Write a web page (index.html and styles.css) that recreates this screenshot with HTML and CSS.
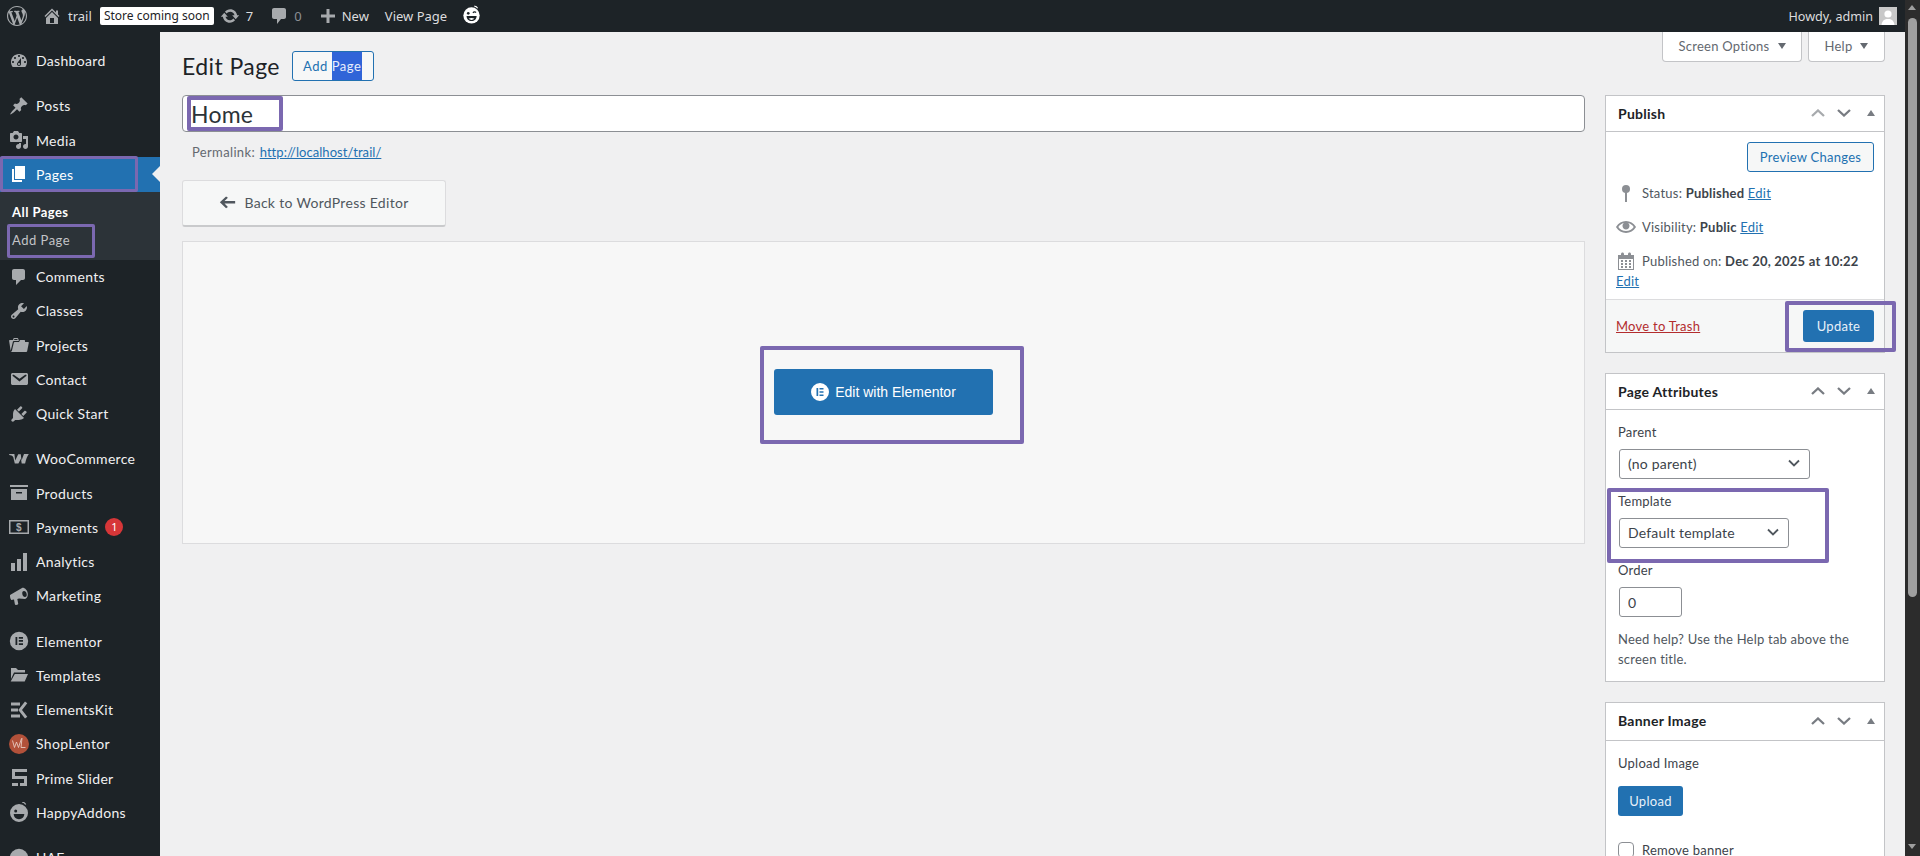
FILE: index.html
```html
<!DOCTYPE html>
<html lang="en">
<head>
<meta charset="utf-8">
<title>Edit Page</title>
<link rel="stylesheet" href="styles.css">
</head>
<body>
<div class="window">
  <header class="adminbar">
    <svg class="ab-wp" viewBox="0 0 20 20"><path d="M20 10c0-5.51-4.49-10-10-10C4.48 0 0 4.49 0 10c0 5.52 4.48 10 10 10 5.51 0 10-4.48 10-10zM7.78 15.37L4.37 6.22c.55-.02 1.17-.08 1.17-.08.5-.06.44-1.13-.06-1.11 0 0-1.45.11-2.37.11-.18 0-.37 0-.58-.01C4.12 2.69 6.87 1.11 10 1.11c2.33 0 4.45.87 6.05 2.34-.68-.11-1.65.39-1.65 1.58 0 .74.45 1.36.9 2.1.35.61.55 1.36.55 2.46 0 1.49-1.4 5-1.4 5l-3.03-8.37c.54-.02.82-.17.82-.17.5-.05.44-1.25-.06-1.22 0 0-1.44.12-2.38.12-.87 0-2.33-.12-2.33-.12-.5-.03-.56 1.2-.06 1.22l.92.08 1.26 3.41zM17.41 10c.24-.64.74-1.87.43-4.25.7 1.29 1.05 2.71 1.05 4.25 0 3.29-1.73 6.24-4.4 7.78.97-2.59 1.94-5.2 2.92-7.78zM6.1 18.09C3.12 16.65 1.11 13.53 1.11 10c0-1.3.23-2.48.72-3.59C3.25 10.3 4.67 14.2 6.1 18.09zm4.03-6.63l2.58 6.98c-.86.29-1.76.45-2.71.45-.79 0-1.57-.11-2.29-.33.81-2.38 1.62-4.74 2.42-7.1z"/></svg>
    <svg class="ab-ico ab-home" viewBox="0 0 20 20"><path d="M16 8.5l1.53 1.53-1.06 1.06L10 4.62l-6.47 6.47-1.06-1.06L10 2.5l4 4v-2h2v4zm-6-2.46l6 5.99V18H4v-5.97zM12 17v-5H8v5h4z"/></svg>
    <span class="ab-text ab-trail">trail</span>
    <span class="ab-badge">Store coming soon</span>
    <svg class="ab-ico ab-update" viewBox="0 0 20 20"><path d="M10.2 3.28c3.53 0 6.43 2.61 6.92 6h2.08l-3.5 4-3.5-4h2.32c-.45-1.97-2.21-3.45-4.32-3.45-1.45 0-2.73.71-3.54 1.78L4.95 5.66C6.23 4.2 8.11 3.28 10.2 3.28zm-.4 13.44c-3.52 0-6.43-2.61-6.92-6H.8l3.5-4c1.17 1.33 2.33 2.67 3.5 4H5.48c.45 1.97 2.21 3.45 4.32 3.45 1.45 0 2.73-.71 3.54-1.78l1.71 1.95c-1.28 1.46-3.15 2.38-5.25 2.38z"/></svg>
    <span class="ab-text ab-seven">7</span>
    <svg class="ab-ico ab-comment" viewBox="0 0 20 20"><path d="M5 2h10c1.1 0 2 .9 2 2v7c0 1.1-.9 2-2 2h-3l-4 5v-5H5c-1.1 0-2-.9-2-2V4c0-1.1.9-2 2-2z"/></svg>
    <span class="ab-text ab-zero">0</span>
    <svg class="ab-ico ab-plus" viewBox="0 0 20 20"><path d="M17 8.5v3h-5.5V17h-3v-5.500H3v-3h5.500V3h3v5.500z"/></svg>
    <span class="ab-text ab-new">New</span>
    <span class="ab-text ab-view">View Page</span>
    <svg class="ab-happy" viewBox="0 0 20 20"><circle cx="10" cy="11" r="8.6" fill="#fff"/><path d="M13 1.2c1.4.1 2.8.9 3.4 2.2" stroke="#fff" stroke-width="1.2" fill="none"/><circle cx="6.6" cy="8.8" r="1.4" fill="#1d2327"/><path d="M11.5 8.3c1-1.3 2.4-1.3 3.3-.4" stroke="#1d2327" stroke-width="1.3" fill="none"/><path d="M4.8 11.5h10.6c0 3.2-2.4 5.3-5.3 5.3s-5.3-2.1-5.3-5.3z" fill="#1d2327"/><path d="M7 14.6c1.8-1.1 4.2-1.1 6 0-1.7 1.500-4.3 1.500-6 0z" fill="#fff"/></svg>
    <span class="ab-text ab-howdy">Howdy, admin</span>
    <svg class="ab-avatar" viewBox="0 0 18 18"><rect width="18" height="18" fill="#c8c8c8"/><circle cx="9" cy="7" r="3.6" fill="#fff"/><path d="M2.5 18c.5-4.4 3-6 6.5-6s6 1.6 6.500 6z" fill="#fff"/></svg>
  </header>
  <div class="below">
    <aside class="sidebar">
      <a class="row"><svg class="mi" viewBox="0 0 20 20"><path d="M3.76 16h12.48c1.1-1.37 1.76-3.11 1.76-5 0-4.42-3.58-8-8-8s-8 3.58-8 8c0 1.890.66 3.63 1.76 5zM10 4c.55 0 1 .45 1 1s-.45 1-1 1-1-.45-1-1 .45-1 1-1zM6 6c.55 0 1 .45 1 1s-.45 1-1 1-1-.45-1-1 .45-1 1-1zm8 0c.55 0 1 .45 1 1s-.45 1-1 1-1-.45-1-1 .45-1 1-1zm-5.370 5.550L12 7v6c0 1.100-.9 2-2 2s-2-.9-2-2c0-.57.24-1.080.63-1.450zM4 10c.55 0 1 .45 1 1s-.45 1-1 1-1-.45-1-1 .45-1 1-1zm12 0c.55 0 1 .45 1 1s-.45 1-1 1-1-.45-1-1 .45-1 1-1zm-5 3c0-.55-.45-1-1-1s-1 .45-1 1 .45 1 1 1 1-.45 1-1z"/></svg><span>Dashboard</span></a>
      <a class="row sep"><svg class="mi" viewBox="0 0 20 20"><path d="M10.440 3.020l1.820-1.820 6.360 6.350-1.830 1.820c-1.050-.68-2.480-.57-3.410.36l-.75.75c-.92.93-1.040 2.350-.35 3.410l-1.830 1.820-2.410-2.410-2.800 2.790c-.42.42-3.380 2.710-3.800 2.290s1.860-3.390 2.280-3.810l2.790-2.790L4.100 9.360l1.830-1.820c1.050.69 2.480.57 3.400-.36l.75-.75c.93-.92 1.050-2.350.36-3.410z"/></svg><span>Posts</span></a>
      <a class="row"><svg class="mi" viewBox="0 0 20 20"><path d="M13 11V4c0-.55-.45-1-1-1h-1.670L9 1H5L3.670 3H2c-.55 0-1 .45-1 1v7c0 .55.45 1 1 1h10c.55 0 1-.45 1-1zM7 4.500c1.380 0 2.500 1.120 2.500 2.500S8.380 9.500 7 9.500 4.500 8.380 4.500 7 5.620 4.500 7 4.500zM14 6h5v10.500c0 1.380-1.120 2.500-2.500 2.500S14 17.880 14 16.500s1.120-2.500 2.500-2.500c.17 0 .34.02.5.05V9h-3V6zm-4 8.050V13h2v3.500c0 1.380-1.120 2.500-2.500 2.500S7 17.880 7 16.500 8.120 14 9.500 14c.17 0 .34.02.5.05z"/></svg><span>Media</span></a>
      <a class="row current"><svg class="mi" viewBox="0 0 20 20"><path d="M6 15V2h10v13H6zm-1 1h8v2H3V5h2v11z"/></svg><span>Pages</span></a>
      <div class="submenu">
        <a class="sub sub-on">All Pages</a>
        <a class="sub">Add Page</a>
      </div>
      <a class="row"><svg class="mi" viewBox="0 0 20 20"><path d="M5 2h9c1.100 0 2 .9 2 2v7c0 1.100-.9 2-2 2h-2l-5 5v-5H5c-1.100 0-2-.9-2-2V4c0-1.100.9-2 2-2z"/></svg><span>Comments</span></a>
      <a class="row"><svg class="mi" viewBox="0 0 20 20"><path d="M16.680 9.770c-1.340 1.340-3.300 1.670-4.950.99l-5.410 6.520c-.99.99-2.590.99-3.580 0s-.99-2.590 0-3.570l6.520-5.420c-.68-1.650-.35-3.610.99-4.950 1.280-1.280 3.120-1.620 4.720-1.060l-2.890 2.890 2.820 2.820 2.860-2.870c.53 1.580.18 3.390-1.080 4.650zM3.810 16.210c.4.39 1.040.39 1.430 0 .4-.4.4-1.040 0-1.430-.39-.4-1.030-.4-1.430 0-.39.39-.39 1.030 0 1.430z"/></svg><span>Classes</span></a>
      <a class="row"><svg class="mi" viewBox="0 0 20 20"><path d="M4 5H.78c-.37 0-.74.32-.69.84l1.560 9.990S3.500 8.470 3.860 6.700c.11-.53.61-.7.98-.7H10s-.7-2.080-.77-2.310C9.110 3.250 8.890 3 8.450 3H5.140c-.36 0-.7.23-.8.64C4.250 4.040 4 5 4 5zm4.880 0h-4s.42-1 .87-1h2.130c.48 0 1 1 1 1zM2.670 16.250c-.31.47-.76.75-1.260.75h15.730c.54 0 .92-.31 1.030-.83.44-2.190 1.680-8.440 1.680-8.440.07-.5-.3-.73-.62-.73H16V5.530c0-.16-.26-.53-.66-.53h-3.760c-.52 0-.87.58-.87.58L10 7H5.590c-.32 0-.63.19-.69.5 0 0-1.590 6.700-1.720 7.330-.07.37-.22.99-.51 1.420z"/></svg><span>Projects</span></a>
      <a class="row"><svg class="mi" viewBox="0 0 20 20"><path d="M3.870 4h13.250C18.370 4 19 4.590 19 5.790v8.420c0 1.190-.63 1.790-1.880 1.790H3.870c-1.250 0-1.880-.6-1.880-1.790V5.790c0-1.200.63-1.790 1.880-1.790zm6.620 8.600l6.740-5.530c.24-.2.43-.66.13-1.070-.29-.41-.82-.42-1.170-.17l-5.700 3.860L4.800 5.830c-.35-.25-.88-.24-1.170.17-.3.41-.11.87.13 1.070z"/></svg><span>Contact</span></a>
      <a class="row"><svg class="mi" viewBox="0 0 20 20"><path d="M13.110 4.360L9.870 7.600 8 5.730l3.240-3.240c.35-.34 1.050-.2 1.560.32.52.51.66 1.210.31 1.550zm-8 1.770l.91-1.120 9.010 9.010-1.190.84c-.71.71-2.630 1.160-3.820 1.160H6.140L4.900 17.260c-.59.59-1.540.59-2.120 0-.59-.58-.59-1.530 0-2.120l1.240-1.240v-3.880c0-1.130.4-3.190 1.090-3.890zm7.260 3.970l3.240-3.240c.34-.35 1.040-.21 1.550.31.52.51.66 1.210.31 1.550l-3.240 3.250z"/></svg><span>Quick Start</span></a>
      <a class="row sep"><svg class="mi" viewBox="0 0 20 20"><path d="M.2 5h5.200l.8 6.500L9.200 5.200h2.600l.7 6.300 2.500-6.500h4.800c-1.400 1.800-2.800 5.200-3.700 9.500h-3.400l-.8-4.700-2.500 4.700H5.800L4.300 8.300C3.700 6.800 1.600 6 .2 6z"/></svg><span>WooCommerce</span></a>
      <a class="row"><svg class="mi" viewBox="0 0 20 20"><path d="M1 2h18v2H1zM2 6h16v11H2zm5 3v1.500h6V9z" fill-rule="evenodd"/></svg><span>Products</span></a>
      <a class="row"><svg class="mi" viewBox="0 0 20 20"><path fill-rule="evenodd" d="M0 3h20v14H0zm1.500 1.500v11h17v-11z"/><text x="10" y="13.800" class="dollar">$</text></svg><span>Payments</span><b class="count">1</b></a>
      <a class="row"><svg class="mi" viewBox="0 0 20 20"><path d="M2 11h4v8H2zM8 7h4v12H8zM14 1h4v18h-4z"/></svg><span>Analytics</span></a>
      <a class="row"><svg class="mi" viewBox="0 0 20 20"><path fill-rule="evenodd" d="M1 9l12-7c1.800-.9 5 1.500 5.700 5 .5 3-.8 5.700-2.700 5.900L10 12.500l-1.700.4.9 4.600c.1.6-.3 1.100-.9 1.200l-1.300.2c-.5.100-1-.2-1.100-.7L5 13.600l-2.700.5C1.400 13 .9 11 1 9zm14-4c-1.300 0-2 1.300-1.700 3 .3 1.700 1.400 3 2.700 3s2-1.300 1.700-3C17.400 6.300 16.300 5 15 5z"/></svg><span>Marketing</span></a>
      <a class="row sep"><svg class="mi" viewBox="0 0 20 20"><path fill-rule="evenodd" d="M10 .8a9.200 9.200 0 1 0 0 18.400A9.200 9.200 0 0 0 10 .8zM6.500 6h1.800v8H6.500zm3.300 0H14v1.700H9.800zm0 3.100H14v1.700H9.800zm0 3.200H14V14H9.800z"/></svg><span>Elementor</span></a>
      <a class="row"><svg class="mi" viewBox="0 0 20 20"><path d="M2 3h5l2 2h7v2.500H5L2 14zM5.800 9H19l-3.300 7.500H1.700z"/></svg><span>Templates</span></a>
      <a class="row"><svg class="mi" viewBox="0 0 20 20"><path d="M2 2.500h9v3H2zM2 8.500h7v3H2zM2 14.500h9v3H2zM16 1.500l2.300 1.800-5.300 6.700 5.300 6.700-2.300 1.800L9.300 10z"/></svg><span>ElementsKit</span></a>
      <a class="row"><svg class="mi mi-shop" viewBox="0 0 20 20"><circle cx="10" cy="10" r="10" fill="#b2513a"/><path d="M3.500 6.500l2 7 2-5.500 2 5.500 3-9M13 4l-1 9.500h4.500" stroke="#e9c9bf" stroke-width=".9" fill="none"/></svg><span>ShopLentor</span></a>
      <a class="row"><svg class="mi" viewBox="0 0 20 20"><path d="M3 1h15v3H6v4h12v10h-7v-3h4v-4H3zM3 15h6v3H3z"/></svg><span>Prime Slider</span></a>
      <a class="row"><svg class="mi" viewBox="0 0 20 20"><path fill-rule="evenodd" d="M10 2a9 9 0 1 0 0 18 9 9 0 0 0 0-18zM6.700 7.500a1.500 1.500 0 1 1 0 3 1.500 1.500 0 0 1 0-3zM4.700 12h10.600c0 3-2.300 5.200-5.300 5.200S4.700 15 4.700 12z"/><path d="M13 0c1.600.2 3 1.100 3.700 2.500M11.500 8.400c1-1.300 2.400-1.300 3.300-.4" stroke="#a7aaad" stroke-width="1.200" fill="none"/></svg><span>HappyAddons</span></a>
      <a class="row sep"><svg class="mi" viewBox="0 0 20 20"><circle cx="10" cy="10" r="9.200"/></svg><span>UAE</span></a>
    </aside>
    <main class="content">
      <div class="head">
        <div class="title-row">
          <h1>Edit Page</h1>
          <a class="add-new">Add <span class="selected">Page</span></a>
        </div>
        <div class="tabs">
          <a class="tab tab-options">Screen Options <i class="tri"></i></a>
          <a class="tab tab-help">Help <i class="tri"></i></a>
        </div>
      </div>
      <div class="columns">
        <div class="left">
          <input class="post-title" type="text" value="Home">
          <p class="permalink">Permalink: <a class="link">http://localhost/trail/</a></p>
          <a class="back-btn"><svg class="back-arrow" viewBox="0 0 20 20"><path d="M19 8.500H6.500l4-4L8.300 3 1 10l7.300 7 2.200-1.500-4-4H19z" transform="translate(0 -.2)"/></svg>Back to WordPress Editor</a>
          <div class="elementor-panel">
            <a class="elementor-btn"><svg class="eicon" viewBox="0 0 18 18"><path fill-rule="evenodd" d="M9 0a9 9 0 1 0 0 18A9 9 0 0 0 9 0zM5.500 5h1.700v8H5.500zm3 0h4v1.600h-4zm0 3.200h4v1.600h-4zm0 3.200h4V13h-4z"/></svg>Edit with Elementor</a>
          </div>
        </div>
        <div class="right">
          <section class="mbox">
            <div class="mbox-head"><h2>Publish</h2>
              <svg class="hnd off" viewBox="0 0 14 8"><path d="M1 7l6-5.500L13 7" /></svg>
              <svg class="hnd" viewBox="0 0 14 8"><path d="M1 1l6 5.500L13 1"/></svg>
              <i class="toggle"></i>
            </div>
            <div class="preview-row"><a class="btn-outline">Preview Changes</a></div>
            <div class="misc">
              <div class="misc-row"><svg class="misc-ico" viewBox="0 0 20 20"><circle cx="10" cy="6" r="4"/><rect x="9" y="8" width="2" height="11"/></svg><span>Status: <b>Published</b> <a class="link">Edit</a></span></div>
              <div class="misc-row"><svg class="misc-ico" viewBox="0 0 20 20"><path d="M19.700 9.400C17.700 6 14 3.900 10 3.900S2.300 6 .3 9.400L0 10l.3.6c2 3.400 5.700 5.500 9.700 5.500s7.700-2.100 9.700-5.500l.3-.6-.3-.6zM10 14.100c-3.100 0-6-1.600-7.700-4.100C3.600 8 5.700 6.600 8 6.100c-.9.6-1.500 1.700-1.500 2.900 0 1.900 1.600 3.500 3.500 3.500s3.500-1.600 3.500-3.500c0-1.200-.6-2.300-1.500-2.900 2.300.5 4.400 1.900 5.700 3.900-1.700 2.500-4.600 4.100-7.700 4.100z"/></svg><span>Visibility: <b>Public</b> <a class="link">Edit</a></span></div>
              <div class="misc-row misc-date"><svg class="misc-ico" viewBox="0 0 20 20"><path d="M15 4h3v15H2V4h3V3c0-.41.15-.76.44-1.060.29-.29.65-.44 1.060-.44s.77.15 1.060.44c.29.3.44.65.44 1.060v1h4V3c0-.41.15-.76.44-1.060.29-.29.65-.44 1.060-.44s.77.15 1.060.44c.29.3.44.65.44 1.060v1zM17 18V8H3v10h14zM7 9v2H5V9h2zm2 0h2v2H9V9zm4 2V9h2v2h-2zm-6 1v2H5v-2h2zm2 0h2v2H9v-2zm4 2v-2h2v2h-2zm-6 1v2H5v-2h2zm4 2H9v-2h2v2zm4 0h-2v-2h2v2z"/></svg><span>Published on: <b>Dec 20, 2025 at 10:22</b></span></div>
              <a class="link misc-edit">Edit</a>
            </div>
            <div class="major">
              <a class="trash">Move to Trash</a>
              <a class="btn-primary btn-update">Update</a>
            </div>
          </section>
          <section class="mbox">
            <div class="mbox-head"><h2>Page Attributes</h2>
              <svg class="hnd" viewBox="0 0 14 8"><path d="M1 7l6-5.500L13 7"/></svg>
              <svg class="hnd" viewBox="0 0 14 8"><path d="M1 1l6 5.500L13 1"/></svg>
              <i class="toggle"></i>
            </div>
            <div class="attrs">
              <label class="lbl">Parent</label>
              <div class="select select-parent">(no parent)<svg class="chev" viewBox="0 0 12 8"><path d="M1 1.500l5 5 5-5"/></svg></div>
              <label class="lbl lbl-next">Template</label>
              <div class="select select-template">Default template<svg class="chev" viewBox="0 0 12 8"><path d="M1 1.500l5 5 5-5"/></svg></div>
              <label class="lbl lbl-next">Order</label>
              <input class="order" type="text" value="0">
              <p class="help">Need help? Use the Help tab above the screen title.</p>
            </div>
          </section>
          <section class="mbox">
            <div class="mbox-head mbox-head-tall"><h2>Banner Image</h2>
              <svg class="hnd" viewBox="0 0 14 8"><path d="M1 7l6-5.500L13 7"/></svg>
              <svg class="hnd" viewBox="0 0 14 8"><path d="M1 1l6 5.500L13 1"/></svg>
              <i class="toggle"></i>
            </div>
            <div class="attrs">
              <label class="lbl">Upload Image</label>
              <a class="btn-primary btn-upload">Upload</a>
              <div class="check-row"><i class="check"></i><span>Remove banner</span></div>
            </div>
          </section>
        </div>
      </div>
    </main>
  </div>
  <div class="note note-pages"></div>
  <div class="note note-add"></div>
  <div class="note note-home"></div>
  <div class="note note-elementor"></div>
  <div class="note note-update"></div>
  <div class="note note-template"></div>
</div>
<div class="scrollbar">
  <i class="sb-up"></i>
  <div class="sb-thumb"></div>
  <i class="sb-down"></i>
</div>
</body>
</html>
```
FILE: styles.css
```css
* { box-sizing: border-box; }
html, body { margin: 0; height: 856px; overflow: hidden; }
body { display: flex; font-family: "Lato", "Noto Sans", sans-serif; font-size: 14px; color: #3c434a; background: #f0f0f1; }
a { text-decoration: none; }
h1, h2, p { margin: 0; font-weight: 400; }

.window { position: relative; flex: 1; min-width: 0; height: 856px; overflow: hidden; display: flex; flex-direction: column; }

/* admin bar */
.adminbar { height: 32px; flex: none; background: #1d2327; display: flex; align-items: center; font-family: "Noto Sans", sans-serif; font-size: 13px; color: #dcdcde; }
.adminbar svg { flex: none; }
.ab-wp { width: 20px; height: 20px; margin-left: 7px; fill: #a7aaad; }
.ab-ico { width: 20px; height: 20px; fill: #a7aaad; }
.ab-home { margin-left: 15px; }
.ab-trail { margin-left: 6px; }
.ab-badge { margin-left: 8px; width: 114px; height: 18px; background: #fff; color: #1d2327; border-radius: 2px; font-size: 12px; line-height: 17px; text-align: center; white-space: nowrap; }
.ab-update { margin-left: 6px; }
.ab-seven { margin-left: 6px; }
.ab-comment { margin-left: 16px; }
.ab-zero { margin-left: 5px; color: #8c8f94; }
.ab-plus { margin-left: 16px; }
.ab-new { margin-left: 4px; }
.ab-view { margin-left: 16px; }
.ab-happy { width: 19px; height: 19px; margin-left: 15px; margin-top: -4px; }
.ab-howdy { margin-left: auto; font-size: 12.6px; }
.ab-avatar { width: 18px; height: 18px; margin-left: 6px; margin-right: 8px; }

.below { flex: 1; display: flex; min-height: 0; }

/* sidebar */
.sidebar { width: 160px; flex: none; background: #1d2327; padding-top: 11.5px; color: #f0f0f1; overflow: hidden; }
.row { height: 34.25px; display: flex; align-items: center; padding-left: 9px; gap: 7px; color: #f0f0f1; position: relative; letter-spacing: .32px; }
.row.sep { margin-top: 11px; }
.mi { width: 20px; height: 20px; fill: #a7aaad; flex: none; }
.mi-shop { fill: none; }
.dollar { font-family: "Liberation Sans", sans-serif; font-size: 10px; font-weight: 700; text-anchor: middle; fill: #a7aaad; }
.current { background: #2271b1; color: #fff; }
.current .mi { fill: #fff; }
.current::after { content: ""; position: absolute; right: 0; top: 9px; border: 8px solid transparent; border-right-color: #f0f0f1; border-left-width: 0; }
.submenu { height: 68px; padding: 6px 0; background: #2c3338; }
.sub { display: block; height: 28px; line-height: 28px; padding-left: 12px; font-size: 13px; letter-spacing: .5px; color: #c3c4c7; }
.sub-on { color: #fff; font-weight: 700; letter-spacing: .45px; }
.count { width: 18px; height: 18px; border-radius: 50%; background: #d63638; color: #fff; font: 400 11px/18px "Noto Sans", sans-serif; text-align: center; letter-spacing: 0; }

/* content */
.content { flex: 1; min-width: 0; padding: 0 20px 0 22px; }
.head { display: flex; height: 60px; }
.title-row { display: flex; align-items: center; gap: 12px; padding-top: 19px; height: 49px; }
h1 { font-size: 23px; line-height: 30px; color: #1d2327; letter-spacing: .42px; }
.add-new { display: block; width: 82px; height: 30px; border: 1px solid #2271b1; border-radius: 3px; background: #f6f7f7; color: #2271b1; font-size: 13px; line-height: 28px; padding-left: 10px; letter-spacing: .55px; white-space: pre; }
.selected { display: inline-block; height: 28px; vertical-align: top; padding: 0 1px 0 0; background: #3064d8; color: #e8eefc; }
.tabs { margin-left: auto; display: flex; gap: 6px; }
.tab { height: 30px; border: 1px solid #c3c4c7; border-top: 0; border-radius: 0 0 4px 4px; background: #fff; color: #646970; font-size: 13px; line-height: 28px; display: flex; align-items: center; justify-content: center; gap: 8px; letter-spacing: .25px; padding-bottom: 1px; }
.tab-options { width: 140px; }
.tab-help { width: 77px; }
.tri { width: 0; height: 0; border: 4px solid transparent; border-top: 6px solid #646970; border-bottom: 0; margin-left: 0; }

.columns { display: flex; gap: 20px; margin-top: 3px; }
.left { flex: 1; min-width: 0; }
.right { width: 280px; flex: none; display: flex; flex-direction: column; gap: 20px; }

.post-title { display: block; width: 100%; height: 37px; border: 1px solid #8c8f94; border-radius: 4px; background: #fff; padding: 0 9px 0 8px; font: 400 23px/35px "Lato", sans-serif; color: #2c3338; letter-spacing: .2px; outline: 0; }
.permalink { height: 20px; margin-top: 10px; padding-left: 10px; line-height: 20px; font-size: 13px; letter-spacing: .35px; color: #646970; }
.link { color: #2271b1; text-decoration: underline; }
.permalink .link { letter-spacing: .05px; margin-left: 1px; }
.back-btn { display: flex; align-items: center; justify-content: center; gap: 8px; width: 264px; height: 47px; margin-top: 18px; padding-bottom: 2px; border: 1px solid #dcdcde; border-bottom: 2px solid #c9cacc; border-radius: 3px; background: #f6f7f7; color: #50575e; letter-spacing: .3px; }
.back-arrow { width: 17px; height: 17px; fill: #50575e; }
.elementor-panel { height: 303px; margin-top: 14px; border: 1px solid #dcdcde; background: #f7f7f7; display: flex; align-items: center; justify-content: center; }
.elementor-btn { display: flex; align-items: center; justify-content: center; gap: 6px; width: 219px; height: 46px; margin-top: -2px; background: #2271b1; border-radius: 3px; color: #fff; font-family: "Liberation Sans", sans-serif; font-size: 14px; }
.eicon { width: 18px; height: 18px; fill: #fff; }

/* meta boxes */
.mbox { background: #fff; border: 1px solid #c3c4c7; flex: none; }
.mbox-head { height: 36px; display: flex; align-items: center; padding: 0 9px 1px 12px; border-bottom: 1px solid #c3c4c7; }
.mbox-head-tall { height: 38px; padding-bottom: 2px; }
h2 { font-size: 14px; font-weight: 700; color: #1d2327; margin-right: auto; letter-spacing: .25px; }
.hnd { width: 14px; height: 8px; margin-left: 12px; fill: none; stroke: #787c82; stroke-width: 2.3; }
.hnd.off { stroke: #a7aaad; margin-left: 0; }
.toggle { width: 0; height: 0; margin-left: 16px; border: 4px solid transparent; border-bottom: 6px solid #787c82; border-top: 0; }

.preview-row { display: flex; justify-content: flex-end; padding: 10px 10px 0; }
.btn-outline { display: block; width: 127px; height: 30px; border: 1px solid #2271b1; border-radius: 3px; background: #f6f7f7; color: #2271b1; font-size: 13px; line-height: 28px; text-align: center; letter-spacing: .25px; }
.misc { height: 127px; padding: 11px 10px 0; font-size: 13px; letter-spacing: .22px; }
.misc-row { display: flex; align-items: center; gap: 6px; height: 20px; margin-bottom: 14px; color: #50575e; white-space: nowrap; }
.misc-row b { color: #3c434a; }
.misc-date { margin-bottom: 0; }
.misc-ico { width: 20px; height: 20px; flex: none; fill: #8c8f94; }
.misc-edit { display: block; line-height: 20px; }
.major { height: 53px; display: flex; align-items: center; justify-content: space-between; padding: 0 10px 1px; background: #f6f7f7; border-top: 1px solid #dcdcde; font-size: 13px; }
.trash { color: #b32d2e; text-decoration: underline; letter-spacing: .25px; }
.btn-primary { display: block; background: #2271b1; color: #e8f0f8; border-radius: 3px; text-align: center; font-size: 13px; letter-spacing: .3px; }
.btn-update { width: 71px; height: 32px; line-height: 32px; }
.attrs { padding: 12px; font-size: 13px; letter-spacing: .22px; }
.lbl { display: block; height: 20px; line-height: 20px; color: #3c434a; }
.lbl-next { margin-top: 12px; }
.select { display: flex; align-items: center; height: 30px; margin-top: 7px; margin-left: 1px; padding: 0 9px 2px 8px; border: 1px solid #8c8f94; border-radius: 3px; background: #fff; font-size: 14px; letter-spacing: .2px; color: #3c434a; justify-content: space-between; }
.select-parent { width: 191px; }
.select-template { width: 170px; }
.chev { width: 12px; height: 8px; fill: none; stroke: #50575e; stroke-width: 1.800; }
.order { display: block; width: 63px; height: 30px; margin: 7px 0 0 1px; padding: 0 8px; border: 1px solid #8c8f94; border-radius: 3px; font: 400 14px "Lato", sans-serif; color: #3c434a; outline: 0; }
.help { margin-top: 12px; line-height: 20px; color: #50575e; }
.btn-upload { width: 65px; height: 30px; line-height: 30px; margin-top: 13px; }
.check-row { display: flex; gap: 8px; margin-top: 26px; height: 20px; align-items: flex-start; }
.check { width: 16px; height: 16px; border: 1px solid #8c8f94; border-radius: 4px; background: #fff; flex: none; }

/* annotation boxes drawn over the page */
.note { position: absolute; border: 4px solid #7b68b0; border-radius: 2px; pointer-events: none; }
.note-pages { left: 0; top: 156px; width: 138px; height: 36px; border-width: 3px; }
.note-add { left: 7px; top: 224px; width: 88px; height: 34px; border-width: 3px; }
.note-home { left: 187px; top: 96px; width: 96px; height: 35px; }
.note-elementor { left: 760px; top: 346px; width: 264px; height: 98px; }
.note-update { left: 1785px; top: 301px; width: 111px; height: 51px; }
.note-template { left: 1607px; top: 488px; width: 222px; height: 75px; }

/* scrollbar */
.scrollbar { width: 15px; flex: none; height: 856px; background: #2c2c2c; display: flex; flex-direction: column; align-items: center; position: relative; }
.sb-thumb { width: 9px; height: 579px; margin-top: 18px; background: #9f9f9f; border-radius: 5px; }
.sb-up { position: absolute; top: 5px; left: 3px; border: 4.500px solid transparent; border-bottom: 5px solid #9f9f9f; border-top: 0; }
.sb-down { position: absolute; bottom: 7px; left: 3px; border: 4.500px solid transparent; border-top: 5px solid #9f9f9f; border-bottom: 0; }
```
